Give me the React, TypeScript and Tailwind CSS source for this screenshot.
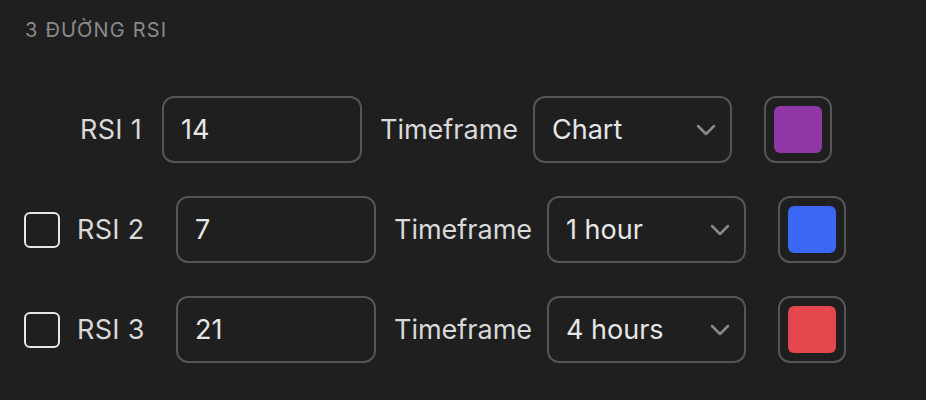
import React from "react";

const ChevronDown = () => (
  <svg width="20" height="12" viewBox="0 0 20 12" fill="none">
    <path d="M2 2l8 8 8-8" stroke="#8a8a8a" strokeWidth="2.5" strokeLinecap="round" strokeLinejoin="round" />
  </svg>
);

type Row = {
  label: string;
  value: string;
  timeframe: string;
  color: string;
  checkbox: boolean;
};

const rows: Row[] = [
  { label: "RSI 1", value: "14", timeframe: "Chart", color: "bg-[#8f37a7]", checkbox: false },
  { label: "RSI 2", value: "7", timeframe: "1 hour", color: "bg-[#3a67f6]", checkbox: true },
  { label: "RSI 3", value: "21", timeframe: "4 hours", color: "bg-[#e3474d]", checkbox: true },
];

const RsiRow = ({ row }: { row: Row }) => {
  return (
    <div className={`flex items-center h-[67px] whitespace-nowrap ${row.checkbox ? "pl-[24px]" : "pl-[80px]"}`}>
      {row.checkbox ? (
        <>
          <div className="w-[36px] h-[36px] rounded-[6px] border-2 border-[#e6e6e6] shrink-0" />
          <span className="ml-[17px] w-[66px] shrink-0 text-[#d9d9d9] tracking-[0.3px]">{row.label}</span>
          <div className="ml-[33px] w-[200px] h-[67px] shrink-0 rounded-[12px] border-2 border-[#555555] flex items-center px-[17px] text-[#e6e6e6]">
            {row.value}
          </div>
        </>
      ) : (
        <>
          <span className="w-[63px] shrink-0 text-[#d9d9d9] tracking-[0.3px]">{row.label}</span>
          <div className="ml-[19px] w-[200px] h-[67px] shrink-0 rounded-[12px] border-2 border-[#555555] flex items-center px-[17px] text-[#e6e6e6]">
            {row.value}
          </div>
        </>
      )}
      <span className="ml-[18px] w-[136px] shrink-0 text-[#d9d9d9]">Timeframe</span>
      <div className="ml-[17px] w-[199px] h-[67px] shrink-0 rounded-[12px] border-2 border-[#555555] flex items-center justify-between pl-[17px] pr-[14px] text-[#e6e6e6]">
        <span>{row.timeframe}</span>
        <ChevronDown />
      </div>
      <div className="ml-[32px] w-[68px] h-[67px] shrink-0 rounded-[12px] border-2 border-[#555555] flex items-center justify-center">
        <div className={`w-[48px] h-[47px] rounded-[6px] ${row.color}`} />
      </div>
    </div>
  );
};

export default function App() {
  return (
    <div className="w-[926px] h-[400px] bg-[#1f1f1f] font-['Inter',sans-serif] text-[27px] leading-[34px] overflow-hidden">
      <div className="pt-[16px] pl-[25px] text-[20px] tracking-[1.2px] text-[#8a8a8a] leading-[28px]">3 ĐƯỜNG RSI</div>
      <div className="mt-[52px] flex flex-col gap-[33px]">
        {rows.map((row, index) => (
          <RsiRow key={index} row={row} />
        ))}
      </div>
    </div>
  );
}
